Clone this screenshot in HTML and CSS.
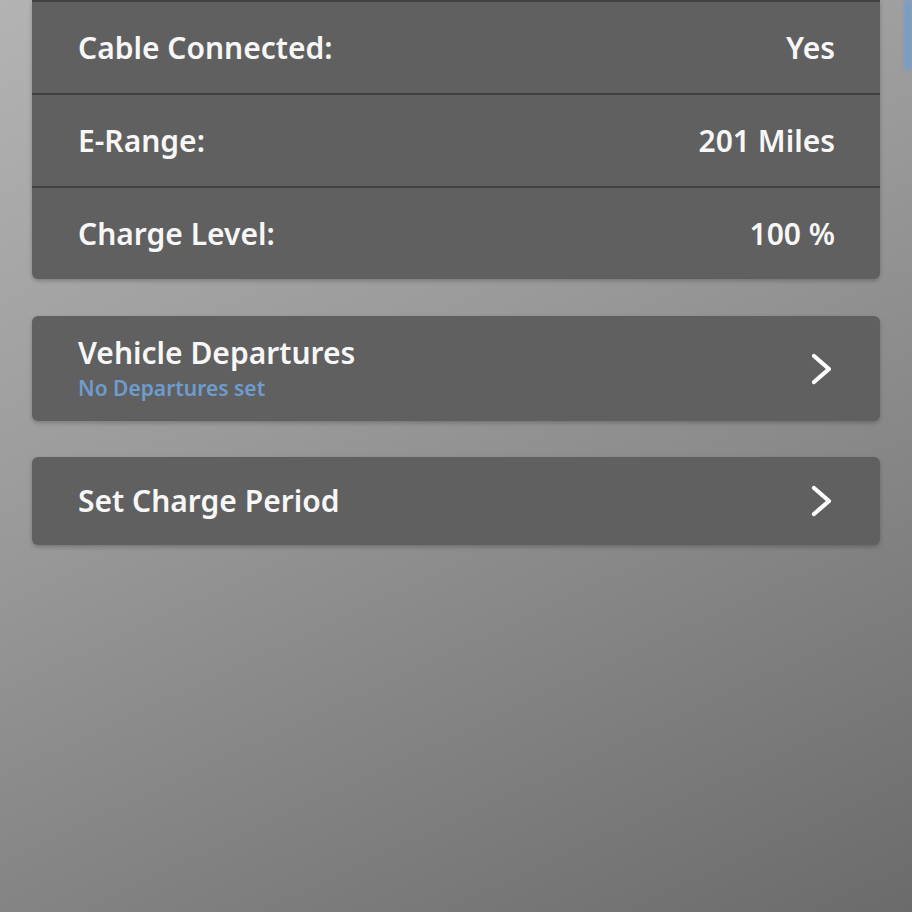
FILE: index.html
```html
<!DOCTYPE html>
<html>
<head>
<meta charset="utf-8">
<link rel="stylesheet" href="styles.css">
</head>
<body>
<div class="screen">
  <div class="card card-status">
    <div class="row"><span class="label">Cable Connected:</span><span class="value">Yes</span></div>
    <div class="row"><span class="label">E-Range:</span><span class="value">201 Miles</span></div>
    <div class="row"><span class="label">Charge Level:</span><span class="value">100 %</span></div>
  </div>
  <div class="card card-link card-tall">
    <div class="text">
      <div class="title">Vehicle Departures</div>
      <div class="subtitle">No Departures set</div>
    </div>
    <svg class="chevron" viewBox="0 0 24 34" width="24" height="34"><path d="M4 4 L19 17 L4 30" fill="none" stroke="#fff" stroke-width="4.2" stroke-linecap="round" stroke-linejoin="round"/></svg>
  </div>
  <div class="card card-link card-short">
    <div class="text">
      <div class="title">Set Charge Period</div>
    </div>
    <svg class="chevron" viewBox="0 0 24 34" width="24" height="34"><path d="M4 4 L19 17 L4 30" fill="none" stroke="#fff" stroke-width="4.2" stroke-linecap="round" stroke-linejoin="round"/></svg>
  </div>
  <div class="scroll-indicator"></div>
</div>
</body>
</html>
```

FILE: styles.css
```css
html, body {
  margin: 0;
  padding: 0;
}
body {
  width: 912px;
  height: 912px;
  overflow: hidden;
  font-family: "Noto Sans", "Open Sans", sans-serif;
}
.screen {
  position: relative;
  width: 912px;
  height: 912px;
  background: linear-gradient(155deg, #b3b3b3 0%, #9a9a9a 40%, #6b6b6b 100%);
  padding: 0 32px;
  box-sizing: border-box;
  display: flex;
  flex-direction: column;
  gap: 36px;
}
.card {
  background: #606060;
  border-radius: 6px;
  box-shadow: 0 2px 4px rgba(0,0,0,0.22);
  color: #f7f7f7;
}
.card-status {
  border-radius: 0 0 6px 6px;
}
.row {
  height: 91px;
  border-top: 2px solid #414141;
  display: flex;
  align-items: center;
  justify-content: space-between;
  padding: 0 45px 0 46px;
  font-size: 30px;
  font-weight: 600;
}
.card-link {
  display: flex;
  align-items: center;
  justify-content: space-between;
  padding: 0 45px 0 46px;
}
.card-tall {
  height: 105px;
  margin-top: 1px;
}
.card-short {
  height: 88px;
}
.title {
  font-size: 30px;
  font-weight: 600;
  line-height: 36px;
}
.card-tall .text {
  margin-top: -3px;
}
.subtitle {
  font-size: 21px;
  font-weight: 600;
  color: #6e9ccd;
  line-height: 24px;
  margin-top: 5px;
}
.chevron {
  display: block;
  margin-right: 1px;
}
.scroll-indicator {
  position: absolute;
  right: 0;
  top: 0;
  width: 8px;
  height: 70px;
  background: #7b9dc2;
  filter: blur(1.5px);
}
```
